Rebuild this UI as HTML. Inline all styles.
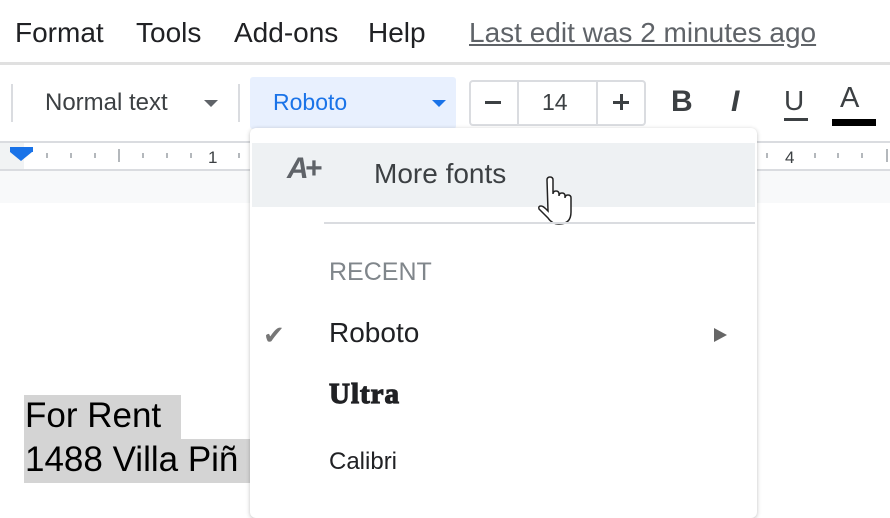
<!DOCTYPE html>
<html><head><meta charset="utf-8"><style>
*{margin:0;padding:0;box-sizing:border-box}
body{width:890px;height:502px;overflow:hidden;background:#fff;font-family:"Liberation Sans",Roboto,sans-serif;position:relative}
.a{position:absolute;white-space:nowrap}
.menu{font-size:28px;color:#202124;top:17px}
</style></head><body>
<div class="a menu" style="left:15px">Format</div>
<div class="a menu" style="left:136px">Tools</div>
<div class="a menu" style="left:234px">Add-ons</div>
<div class="a menu" style="left:368px">Help</div>
<div class="a menu" style="left:469px;color:#5f6368;text-decoration:underline">Last edit was 2 minutes ago</div>
<div class="a" style="left:0;top:62px;width:890px;height:3px;background:#e0e0e0"></div>

<div class="a" style="left:11px;top:84px;width:2px;height:38px;background:#dadce0"></div>
<div class="a" style="left:45px;top:89px;font-size:24px;color:#3c4043">Normal text</div>
<div class="a" style="left:204px;top:100px;border-left:7px solid transparent;border-right:7px solid transparent;border-top:7px solid #5f6368"></div>
<div class="a" style="left:238px;top:84px;width:2px;height:38px;background:#dadce0"></div>
<div class="a" style="left:250px;top:77px;width:206px;height:52px;background:#e8f0fe;border-radius:3px"></div>
<div class="a" style="left:273px;top:89px;font-size:23px;color:#1a73e8">Roboto</div>
<div class="a" style="left:432px;top:100px;border-left:7px solid transparent;border-right:7px solid transparent;border-top:7px solid #1a73e8"></div>
<div class="a" style="left:469px;top:80px;width:177px;height:46px;border:2px solid #dadce0;border-radius:4px"></div>
<div class="a" style="left:517px;top:80px;width:2px;height:46px;background:#dadce0"></div>
<div class="a" style="left:596px;top:80px;width:2px;height:46px;background:#dadce0"></div>
<div class="a" style="left:485px;top:101px;width:16px;height:3px;background:#3c4043"></div>
<div class="a" style="left:542px;top:89px;font-size:23px;color:#3c4043">14</div>
<div class="a" style="left:613px;top:101px;width:16px;height:3px;background:#3c4043"></div>
<div class="a" style="left:620px;top:94px;width:3px;height:16px;background:#3c4043"></div>
<div class="a" style="left:671px;top:85px;font-size:30px;font-weight:bold;color:#3c4043">B</div>
<div class="a" style="left:731px;top:85px;font-size:30px;font-weight:bold;font-style:italic;color:#3c4043">I</div>
<div class="a" style="left:784px;top:85px;font-size:28px;color:#3c4043">U</div>
<div class="a" style="left:784px;top:118px;width:24px;height:3px;background:#3c4043"></div>
<div class="a" style="left:840px;top:82px;font-size:29px;color:#3c4043">A</div>
<div class="a" style="left:832px;top:119px;width:44px;height:7px;background:#000"></div>

<div class="a" style="left:0;top:141px;width:890px;height:2px;background:#dadce0"></div>
<div class="a" style="left:0;top:143px;width:890px;height:26px;background:#fff"></div>
<div class="a" style="left:0;top:143px;width:24px;height:26px;background:#f1f3f4"></div>
<div class="a" style="left:0;top:169px;width:890px;height:2px;background:#dadce0"></div>
<div class="a" style="left:0;top:171px;width:890px;height:32px;background:#f8f9fa"></div>
<div class="a" style="left:10px;top:147px;width:23px;height:5px;background:#1a73e8"></div>
<div class="a" style="left:10px;top:152px;border-left:11.5px solid transparent;border-right:11.5px solid transparent;border-top:9px solid #1a73e8"></div>
<svg class="a" style="left:0;top:143px" width="890" height="26">
<g stroke="#9aa0a6" stroke-width="1.5">
<line x1="47" y1="10" x2="47" y2="15"/><line x1="71" y1="10" x2="71" y2="15"/><line x1="95" y1="10" x2="95" y2="15"/>
<line x1="119" y1="6" x2="119" y2="19"/><line x1="143" y1="10" x2="143" y2="15"/><line x1="167" y1="10" x2="167" y2="15"/><line x1="191" y1="10" x2="191" y2="15"/><line x1="239" y1="10" x2="239" y2="15"/>
<line x1="767" y1="10" x2="767" y2="15"/><line x1="815" y1="10" x2="815" y2="15"/><line x1="838" y1="10" x2="838" y2="15"/><line x1="862" y1="10" x2="862" y2="15"/><line x1="887" y1="6" x2="887" y2="19"/>
</g>
<text x="208" y="20" font-size="17" fill="#3c4043" font-family="Liberation Sans">1</text>
<text x="785" y="20" font-size="17" fill="#3c4043" font-family="Liberation Sans">4</text>
</svg>

<div class="a" style="left:24px;top:395px;width:157px;height:44px;background:#d4d4d4"></div>
<div class="a" style="left:24px;top:439px;width:230px;height:44px;background:#d4d4d4"></div>
<div class="a" style="left:25px;top:396px;font-size:35px;color:#000">For Rent</div>
<div class="a" style="left:25px;top:440px;font-size:35px;color:#000">1488 Villa Piñ</div>

<div class="a" style="left:250px;top:128px;width:507px;height:390px;background:#fff;border-radius:6px;box-shadow:0 1px 4px rgba(0,0,0,.25)"></div>
<div class="a" style="left:252px;top:143px;width:503px;height:64px;background:#eef1f3"></div>
<div class="a" style="left:287px;top:152px;font-size:30px;color:#5f6368;font-style:italic;font-weight:bold;letter-spacing:-4px">A+</div>
<div class="a" style="left:374px;top:158px;font-size:28px;color:#3c4043">More fonts</div>
<svg class="a" style="left:536px;top:176px" width="40" height="50" viewBox="0 0 40 50">
<path d="M11 4 q0-3 3-3 q3 0 3 3 v14 q0-3 3-3 q3 0 3 3 v2 q0-3 3-3 q3 0 3 3 v2 q0-3 3-3 q3 0 3 3 v14 q0 12-12 12 q-7 0-11-6 l-9-9 q-1-3 2-3 q2 0 5 3 l2 2 z" fill="#fff" stroke="#222" stroke-width="1.5"/>
</svg>
<div class="a" style="left:324px;top:222px;width:431px;height:2px;background:#dadce0"></div>
<div class="a" style="left:329px;top:258px;font-size:25px;color:#80868b">RECENT</div>
<div class="a" style="left:263px;top:320px;font-size:26px;color:#777">✔</div>
<div class="a" style="left:329px;top:317px;font-size:28px;color:#202124">Roboto</div>
<div class="a" style="left:714px;top:328px;border-top:7px solid transparent;border-bottom:7px solid transparent;border-left:13px solid #666"></div>
<div class="a" style="left:329px;top:378px;font-size:29px;font-weight:900;color:#202124;font-family:'Liberation Serif',serif;letter-spacing:1px;-webkit-text-stroke:1.2px #202124">Ultra</div>
<div class="a" style="left:329px;top:448px;font-size:24px;color:#202124">Calibri</div>
</body></html>
